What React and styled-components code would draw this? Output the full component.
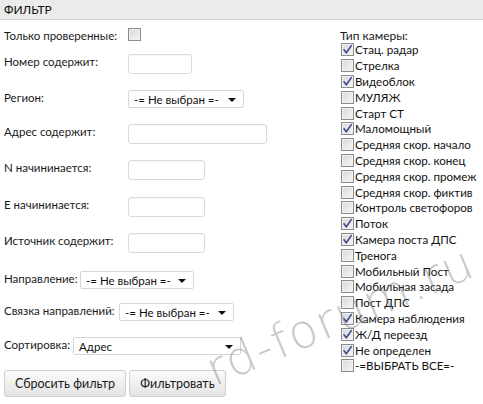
import React from 'react';
import styled, { createGlobalStyle } from 'styled-components';

const GlobalStyle = createGlobalStyle`
  html, body {
    margin: 0;
    padding: 0;
    background: #fff;
  }
  body {
    font-family: Lato, "Noto Sans", sans-serif;
    color: #1a1a1a;
  }
`;

const CAMERA_TYPES = [
  ['Стац. радар', true],
  ['Стрелка', false],
  ['Видеоблок', true],
  ['МУЛЯЖ', false],
  ['Старт СТ', false],
  ['Маломощный', true],
  ['Средняя скор. начало', false],
  ['Средняя скор. конец', false],
  ['Средняя скор. промеж', false],
  ['Средняя скор. фиктив', false],
  ['Контроль светофоров', false],
  ['Поток', true],
  ['Камера поста ДПС', true],
  ['Тренога', false],
  ['Мобильный Пост', false],
  ['Мобильная засада', false],
  ['Пост ДПС', false],
  ['Камера наблюдения', true],
  ['Ж/Д переезд', true],
  ['Не определен', true],
  ['-=ВЫБРАТЬ ВСЕ=-', false],
];

const Checkbox = ({ checked }) => (
  <CheckBoxStyled>
    {checked && (
      <svg width="11" height="11" viewBox="0 0 11 11">
        <path d="M2 5.8 L4.3 8.8 L9.3 1.6" fill="none" stroke="#3b4a8c" strokeWidth="1.6" strokeLinecap="round" strokeLinejoin="round" />
      </svg>
    )}
  </CheckBoxStyled>
);

const Select = ({ value, width }) => (
  <SelectStyled width={width}>
    <span>{value}</span>
    <Arrow />
  </SelectStyled>
);

const App = () => {
  return (
    <Page>
      <GlobalStyle />
      <Header>ФИЛЬТР</Header>
      <Body>
        <LeftColumn>
          <FieldRow h={26}>
            <Label w={124}>Только проверенные:</Label>
            <Checkbox checked={false} />
          </FieldRow>
          <FieldRow h={36}>
            <Label w={124}>Номер содержит:</Label>
            <TextInput w={64} />
          </FieldRow>
          <FieldRow h={34}>
            <Label w={124}>Регион:</Label>
            <Select value="-= Не выбран =-" width={116} />
          </FieldRow>
          <FieldRow h={36}>
            <Label w={124}>Адрес содержит:</Label>
            <TextInput w={139} />
          </FieldRow>
          <FieldRow h={37}>
            <Label w={124}>N начининается:</Label>
            <TextInput w={77} />
          </FieldRow>
          <FieldRow h={36}>
            <Label w={124}>E начининается:</Label>
            <TextInput w={77} />
          </FieldRow>
          <FieldRow h={38}>
            <Label w={124}>Источник содержит:</Label>
            <TextInput w={77} />
          </FieldRow>
          <FieldRow h={32}>
            <Label w={76}>Направление:</Label>
            <Select value="-= Не выбран =-" width={114} />
          </FieldRow>
          <FieldRow h={34}>
            <Label w={115}>Связка направлений:</Label>
            <Select value="-= Не выбран =-" width={115} />
          </FieldRow>
          <FieldRow h={33}>
            <Label w={69}>Сортировка:</Label>
            <Select value="Адрес" width={168} />
          </FieldRow>
          <Buttons>
            <Button w={122}>Сбросить фильтр</Button>
            <Button w={97}>Фильтровать</Button>
          </Buttons>
        </LeftColumn>
        <RightColumn>
          <TypeTitle>Тип камеры:</TypeTitle>
          <TypeList>
            {CAMERA_TYPES.map(([name, checked]) => (
              <TypeRow key={name}>
                <Checkbox checked={checked} />
                <TypeName>{name}</TypeName>
              </TypeRow>
            ))}
          </TypeList>
        </RightColumn>
        <Watermark>rd-forum.ru</Watermark>
      </Body>
    </Page>
  );
};

export default App;

const Page = styled.div`
  width: 483px;
  height: 404px;
  overflow: hidden;
  background: #fff;
`;

const Header = styled.div`
  height: 19px;
  background: #ebebeb;
  border-bottom: 1px solid #d4d4d4;
  padding-left: 4px;
  font-size: 12px;
  line-height: 19px;
  color: #111;
`;

const Body = styled.div`
  position: relative;
  display: flex;
`;

const LeftColumn = styled.div`
  flex: none;
  box-sizing: border-box;
  width: 340px;
  padding: 8px 0 0 4px;
  display: flex;
  flex-direction: column;
`;

const FieldRow = styled.div`
  height: ${(p) => p.h}px;
  display: flex;
  align-items: flex-start;
`;

const Label = styled.div`
  flex: none;
  width: ${(p) => p.w}px;
  font-size: 11.5px;
  line-height: 14px;
  padding-top: 1px;
  white-space: nowrap;
  color: #1a1a1a;
`;

const TextInput = styled.div`
  box-sizing: border-box;
  width: ${(p) => p.w}px;
  height: 20px;
  border: 1px solid #dadada;
  border-radius: 3px;
  background: #fff;
  box-shadow: inset 0 1px 1px rgba(0, 0, 0, 0.04);
`;

const SelectStyled = styled.div`
  box-sizing: border-box;
  width: ${(p) => p.width}px;
  height: 18px;
  border: 1px solid #d6d6d6;
  border-radius: 2px;
  background: #fff;
  display: flex;
  align-items: center;
  justify-content: space-between;
  padding: 0 7px 0 5px;
  font-size: 11.5px;
  color: #111;
  white-space: nowrap;
`;

const Arrow = styled.span`
  width: 0;
  height: 0;
  margin-top: 2px;
  border-left: 4px solid transparent;
  border-right: 4px solid transparent;
  border-top: 4px solid #111;
`;

const Buttons = styled.div`
  display: flex;
  gap: 3px;
`;

const Button = styled.button`
  box-sizing: border-box;
  width: ${(p) => p.w}px;
  height: 27px;
  padding: 0;
  border: 1px solid #cfcfcf;
  border-radius: 3px;
  background: linear-gradient(#fbfbfb, #e4e4e4);
  font-family: inherit;
  font-size: 12.5px;
  color: #1a1a1a;
`;

const RightColumn = styled.div`
  padding-top: 9px;
  display: flex;
  flex-direction: column;
`;

const TypeTitle = styled.div`
  font-size: 12px;
  line-height: 14px;
  height: 14px;
  color: #1a1a1a;
`;

const TypeList = styled.div`
  margin-top: -1px;
  display: flex;
  flex-direction: column;
`;

const TypeRow = styled.div`
  height: 15.8px;
  display: flex;
  align-items: center;
  padding-left: 1px;
`;

const CheckBoxStyled = styled.span`
  box-sizing: border-box;
  flex: none;
  width: 13px;
  height: 13px;
  border: 1px solid #8c8c8c;
  background: linear-gradient(135deg, #d8d8d8, #f6f6f6);
  box-shadow: inset 0 0 0 1px #f0f0f0;
  display: flex;
  align-items: center;
  justify-content: center;
`;

const TypeName = styled.span`
  margin-left: 1px;
  font-size: 11.6px;
  line-height: 15px;
  color: #111;
  white-space: nowrap;
`;

const Watermark = styled.div`
  position: absolute;
  left: 208px;
  top: 328px;
  font-family: "DejaVu Sans", sans-serif;
  font-weight: 200;
  font-size: 47px;
  line-height: 1;
  letter-spacing: 1.5px;
  color: rgba(120, 120, 120, 0.42);
  transform: rotate(-23deg);
  transform-origin: left center;
  white-space: nowrap;
  pointer-events: none;
`;
